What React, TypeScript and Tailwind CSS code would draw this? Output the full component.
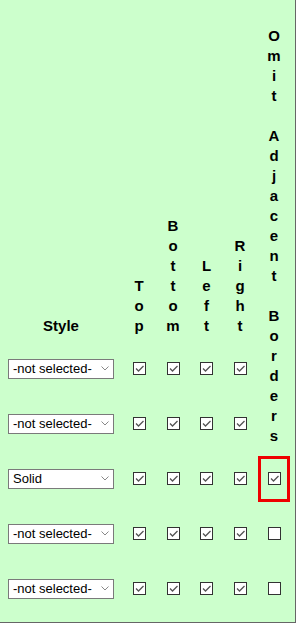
const rows = [
  { style: '-not selected-', omit: null as boolean | null, highlight: false },
  { style: '-not selected-', omit: null, highlight: false },
  { style: 'Solid', omit: true, highlight: true },
  { style: '-not selected-', omit: false, highlight: false },
  { style: '-not selected-', omit: false, highlight: false },
]

const sides = ['Top', 'Bottom', 'Left', 'Right']

function Stacked({ text }: { text: string }) {
  return (
    <div className="flex flex-col items-center text-[15px] font-bold leading-[20px] text-black">
      {text.split('').map((ch, i) => (
        <span key={i} className="h-[20px]">
          {ch === ' ' ? '\u00a0' : ch}
        </span>
      ))}
    </div>
  )
}

function Check({ checked }: { checked: boolean }) {
  return (
    <span className="flex h-[13px] w-[13px] items-center justify-center border border-[#333] bg-white">
      {checked && (
        <svg width="11" height="11" viewBox="0 0 11 11" fill="none" aria-hidden>
          <path d="M2 5.5l2.5 2.5L9.5 3" stroke="#555" strokeWidth="1.3" />
        </svg>
      )}
    </span>
  )
}

function Select({ value }: { value: string }) {
  return (
    <div className="flex h-[20px] w-[106px] items-center justify-between border border-[#7a7a7a] bg-white pl-[4px] pr-[4px] text-[13px] text-black">
      <span className="leading-none">{value}</span>
      <svg width="8" height="5" viewBox="0 0 8 5" fill="none" aria-hidden>
        <path d="M0.5 0.5l3.5 3.5L7.5 0.5" stroke="#888" strokeWidth="1" />
      </svg>
    </div>
  )
}

export default function App() {
  return (
    <div className="h-[623px] w-[296px] border-r border-b border-[#666] bg-[#ccffcc] font-['Liberation_Sans',Arial,sans-serif]">
      <div className="grid grid-cols-[122px_34px_34px_33px_34px_34px] grid-rows-[341px_55px_55px_55px_55px_55px]">
        <div className="flex items-end justify-center pb-[5px] text-[15px] font-bold leading-[20px]">Style</div>
        {sides.map((s) => (
          <div key={s} className="flex items-end justify-center pb-[5px]">
            <Stacked text={s} />
          </div>
        ))}
        <div className="row-span-3 flex items-end justify-center pb-[5px]">
          <Stacked text="Omit Adjacent Borders" />
        </div>

        {rows.map((r, i) => (
          <div key={i} className="contents">
            <div className="flex items-center pl-[8px]">
              <Select value={r.style} />
            </div>
            {sides.map((s) => (
              <div key={s} className="flex items-center justify-center">
                <Check checked />
              </div>
            ))}
            {r.omit !== null && (
              <div className="flex items-center justify-center">
                {r.highlight ? (
                  <span className="flex h-[46px] w-[32px] items-center justify-center border-[3px] border-[#ee0000]">
                    <Check checked={r.omit} />
                  </span>
                ) : (
                  <Check checked={r.omit} />
                )}
              </div>
            )}
          </div>
        ))}
      </div>
    </div>
  )
}
